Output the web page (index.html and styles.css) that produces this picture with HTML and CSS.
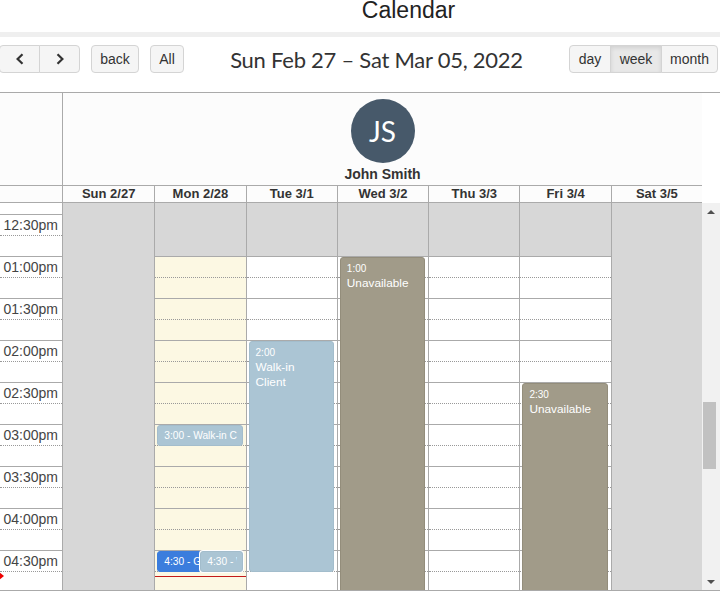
FILE: index.html
```html
<!DOCTYPE html>
<html>
<head>
<meta charset="utf-8">
<title>Calendar</title>
<link rel="stylesheet" href="styles.css">
</head>
<body>
<h1 class="title">Calendar</h1>
<div class="band"></div>
<div class="toolbar">
  <div class="group nav">
    <button class="btn prev"><svg width="8" height="12" viewBox="0 0 8 12"><polyline points="6.5,1.2 1.6,6 6.5,10.8" fill="none" stroke="#333" stroke-width="2.2"/></svg></button>
    <button class="btn next"><svg width="8" height="12" viewBox="0 0 8 12"><polyline points="1.5,1.2 6.4,6 1.5,10.8" fill="none" stroke="#333" stroke-width="2.2"/></svg></button>
  </div>
  <button class="btn back">back</button>
  <button class="btn all">All</button>
  <h2 class="range">Sun Feb 27 – Sat Mar 05, 2022</h2>
  <div class="group views">
    <button class="btn v-day">day</button>
    <button class="btn v-week active">week</button>
    <button class="btn v-month">month</button>
  </div>
</div>
<div class="cal">
  <div class="head res-row">
    <div class="axis-head"></div>
    <div class="res">
      <div class="avatar">JS</div>
      <div class="res-name">John Smith</div>
    </div>
  </div>
  <div class="head day-row">
    <div class="axis-head"></div>
    <div class="dh">Sun 2/27</div>
    <div class="dh">Mon 2/28</div>
    <div class="dh">Tue 3/1</div>
    <div class="dh">Wed 3/2</div>
    <div class="dh">Thu 3/3</div>
    <div class="dh">Fri 3/4</div>
    <div class="dh">Sat 3/5</div>
  </div>
  <div class="body">
    <div class="grid">
      <div class="axis">
        <div class="part"></div>
        <div class="slot h"><span>12:30pm</span></div><div class="slot q"></div>
        <div class="slot h"><span>01:00pm</span></div><div class="slot q"></div>
        <div class="slot h"><span>01:30pm</span></div><div class="slot q"></div>
        <div class="slot h"><span>02:00pm</span></div><div class="slot q"></div>
        <div class="slot h"><span>02:30pm</span></div><div class="slot q"></div>
        <div class="slot h"><span>03:00pm</span></div><div class="slot q"></div>
        <div class="slot h"><span>03:30pm</span></div><div class="slot q"></div>
        <div class="slot h"><span>04:00pm</span></div><div class="slot q"></div>
        <div class="slot h"><span>04:30pm</span></div><div class="slot q"></div>
        <div class="now-arrow"></div>
      </div>
      <div class="col off"></div>
      <div class="col today">
        <div class="closed"></div>
        <div class="slot h"></div><div class="slot q"></div><div class="slot h"></div><div class="slot q"></div>
        <div class="slot h"></div><div class="slot q"></div><div class="slot h"></div><div class="slot q"></div>
        <div class="slot h"></div><div class="slot q"></div><div class="slot h"></div><div class="slot q"></div>
        <div class="slot h"></div><div class="slot q"></div><div class="slot h"></div><div class="slot q"></div>
        <div class="ev walkin short ev-mon-1"><div class="ev-line">3:00 - Walk-in Client</div></div>
        <div class="ev blue short ev-mon-2"><div class="ev-line">4:30 - Group Session</div></div>
        <div class="ev walkin short ev-mon-3"><div class="ev-line">4:30 - Walk-in Client</div></div>
        <div class="now-line"></div>
      </div>
      <div class="col">
        <div class="closed"></div>
        <div class="slot h"></div><div class="slot q"></div><div class="slot h"></div><div class="slot q"></div>
        <div class="slot h"></div><div class="slot q"></div><div class="slot h"></div><div class="slot q"></div>
        <div class="slot h"></div><div class="slot q"></div><div class="slot h"></div><div class="slot q"></div>
        <div class="slot h"></div><div class="slot q"></div><div class="slot h"></div><div class="slot q"></div>
        <div class="ev walkin ev-tue"><div class="ev-time">2:00</div><div class="ev-title">Walk-in Client</div></div>
      </div>
      <div class="col">
        <div class="closed"></div>
        <div class="slot h"></div><div class="slot q"></div><div class="slot h"></div><div class="slot q"></div>
        <div class="slot h"></div><div class="slot q"></div><div class="slot h"></div><div class="slot q"></div>
        <div class="slot h"></div><div class="slot q"></div><div class="slot h"></div><div class="slot q"></div>
        <div class="slot h"></div><div class="slot q"></div><div class="slot h"></div><div class="slot q"></div>
        <div class="ev unavail ev-wed"><div class="ev-time">1:00</div><div class="ev-title">Unavailable</div></div>
      </div>
      <div class="col">
        <div class="closed"></div>
        <div class="slot h"></div><div class="slot q"></div><div class="slot h"></div><div class="slot q"></div>
        <div class="slot h"></div><div class="slot q"></div><div class="slot h"></div><div class="slot q"></div>
        <div class="slot h"></div><div class="slot q"></div><div class="slot h"></div><div class="slot q"></div>
        <div class="slot h"></div><div class="slot q"></div><div class="slot h"></div><div class="slot q"></div>
      </div>
      <div class="col">
        <div class="closed"></div>
        <div class="slot h"></div><div class="slot q"></div><div class="slot h"></div><div class="slot q"></div>
        <div class="slot h"></div><div class="slot q"></div><div class="slot h"></div><div class="slot q"></div>
        <div class="slot h"></div><div class="slot q"></div><div class="slot h"></div><div class="slot q"></div>
        <div class="slot h"></div><div class="slot q"></div><div class="slot h"></div><div class="slot q"></div>
        <div class="ev unavail ev-fri"><div class="ev-time">2:30</div><div class="ev-title">Unavailable</div></div>
      </div>
      <div class="col off"></div>
    </div>
    <div class="sb">
      <div class="sb-btn"><span class="tri-up"></span></div>
      <div class="sb-thumb"></div>
      <div class="sb-fill"></div>
      <div class="sb-btn"><span class="tri-down"></span></div>
    </div>
  </div>
</div>
</body>
</html>
```
FILE: styles.css
```css
* { box-sizing: border-box; }
html, body { margin: 0; padding: 0; }
body {
  width: 720px;
  height: 592px;
  overflow: hidden;
  background: #fff;
  font-family: "Liberation Sans", Arial, sans-serif;
  color: #333;
}
.title {
  margin: 0;
  height: 32px;
  padding-left: 97px;
  text-align: center;
  font-size: 23px;
  font-weight: normal;
  line-height: 21px;
  color: #222;
}
.band { height: 5px; background: #efefef; }

.toolbar {
  height: 55px;
  padding-top: 8px;
  display: flex;
  align-items: flex-start;
}
.btn {
  height: 28px;
  border: 1px solid #d4d4d4;
  background: #f5f5f5;
  color: #333;
  font: 14px/26px "Liberation Sans", Arial, sans-serif;
  padding: 0;
  border-radius: 4px;
  display: flex;
  align-items: center;
  justify-content: center;
}
.group { display: flex; }
.group .btn { border-radius: 0; }
.group .btn + .btn { margin-left: -1px; }
.group .btn:first-child { border-radius: 4px 0 0 4px; }
.group .btn:last-child { border-radius: 0 4px 4px 0; }
.nav { margin-left: -1px; }
.prev, .next { width: 41px; }
.back { width: 48px; margin-left: 11px; }
.all { width: 34px; margin-left: 11px; }
.range {
  flex: 1;
  margin: 0;
  text-align: center;
  font: 400 22px/30px "Lato", "Open Sans", sans-serif;
  letter-spacing: -0.25px;
  color: #333;
}
.views { margin-right: 2px; }
.v-day { width: 42px; }
.v-week { width: 52px; }
.v-month { width: 57px; }
.btn.active {
  background: #e8e8e8;
  box-shadow: inset 0 2px 4px rgba(0, 0, 0, 0.1);
}

.cal { border-top: 1px solid #aaa; }
.head {
  width: 702px;
  display: grid;
  grid-template-columns: 63px repeat(7, 1fr);
  border-bottom: 1px solid #aaa;
  background: #fcfcfc;
}
.axis-head { border-right: 1px solid #aaa; }
.res-row { grid-template-columns: 63px 1fr; height: 93px; }
.res {
  display: flex;
  flex-direction: column;
  align-items: center;
  padding-top: 6px;
}
.avatar {
  width: 64px;
  height: 64px;
  border-radius: 50%;
  background: #47596a;
  color: #fff;
  display: flex;
  align-items: center;
  justify-content: center;
  font: 400 28px/1 "Lato", "Open Sans", sans-serif;
}
.res-name {
  font-size: 14px;
  font-weight: bold;
  line-height: 22px;
  color: #333;
}
.day-row { height: 17px; }
.dh {
  font-size: 13px;
  font-weight: bold;
  line-height: 16px;
  text-align: center;
  color: #333;
}
.dh + .dh { border-left: 1px solid #aaa; }

.body {
  display: flex;
  height: 388px;
  border-bottom: 1px solid #aaa;
}
.grid {
  width: 702px;
  height: 387px;
  overflow: hidden;
  display: grid;
  grid-template-columns: 63px repeat(7, 1fr);
}
.axis {
  position: relative;
  border-right: 1px solid #aaa;
  background: #fff;
}
.part { height: 11px; }
.slot { height: 21px; }
.slot.h { border-top: 1px solid #aaa; }
.slot.q { border-top: 1px dotted #999; }
.axis .slot.h {
  text-align: right;
  padding-right: 4px;
  font-size: 14px;
  line-height: 20px;
  color: #444;
}
.now-arrow {
  position: absolute;
  left: -2px;
  top: 368px;
  width: 0;
  height: 0;
  border-style: solid;
  border-width: 5px 0 5px 6px;
  border-color: transparent transparent transparent #e00;
}

.col { position: relative; background: #fff; }
.col + .col { border-left: 1px solid #aaa; }
.col.off { background: #d7d7d7; }
.col.today { background: #fcf8e3; }
.closed { height: 53px; background: #d7d7d7; }

.ev {
  position: absolute;
  left: 2px;
  right: 3px;
  border: 1px solid;
  border-radius: 3px;
  color: #fff;
  padding: 4px 8px 0 6px;
  overflow: hidden;
  font-size: 11.6px;
}
.ev-time { font-size: 10px; line-height: 14px; }
.ev-title { font-size: 11.8px; line-height: 14.5px; }
.ev.short {
  padding: 3px 5px 0 6px;
  font-size: 10.2px;
  line-height: 14px;
  white-space: nowrap;
}
.ev-line { overflow: hidden; }
.walkin { background: #abc5d4; border-color: #a3bdcc; }
.unavail { background: #a19b89; border-color: #938d7b; }
.blue { background: #3b7ddd; border-color: #3b7ddd; }
.ev-wed { top: 54px; height: 340px; }
.ev-fri { top: 180px; height: 300px; }
.ev-tue { top: 138px; height: 231px; }
.ev-mon-1 { top: 222px; height: 21px; }
.ev-mon-2 { top: 348px; height: 21px; }
.ev-mon-3 { top: 348px; height: 21px; left: 45px; box-shadow: 0 0 0 1px #fff; }
.now-line {
  position: absolute;
  left: 0;
  right: 0;
  top: 373px;
  border-top: 1px solid #c41a1a;
}

.sb {
  width: 18px;
  background: #f1f1f1;
  display: flex;
  flex-direction: column;
}
.sb-btn {
  height: 17px;
  display: flex;
  align-items: center;
  justify-content: center;
  padding-right: 1px;
}
.tri-up, .tri-down {
  width: 0;
  height: 0;
  border-left: 4px solid transparent;
  border-right: 4px solid transparent;
}
.tri-up { border-bottom: 4px solid #505050; }
.tri-down { border-top: 4px solid #505050; }
.sb-thumb {
  margin: 182px 0 0 1px;
  width: 13px;
  height: 67px;
  background: #c1c1c1;
}
.sb-fill { flex: 1; }
```
